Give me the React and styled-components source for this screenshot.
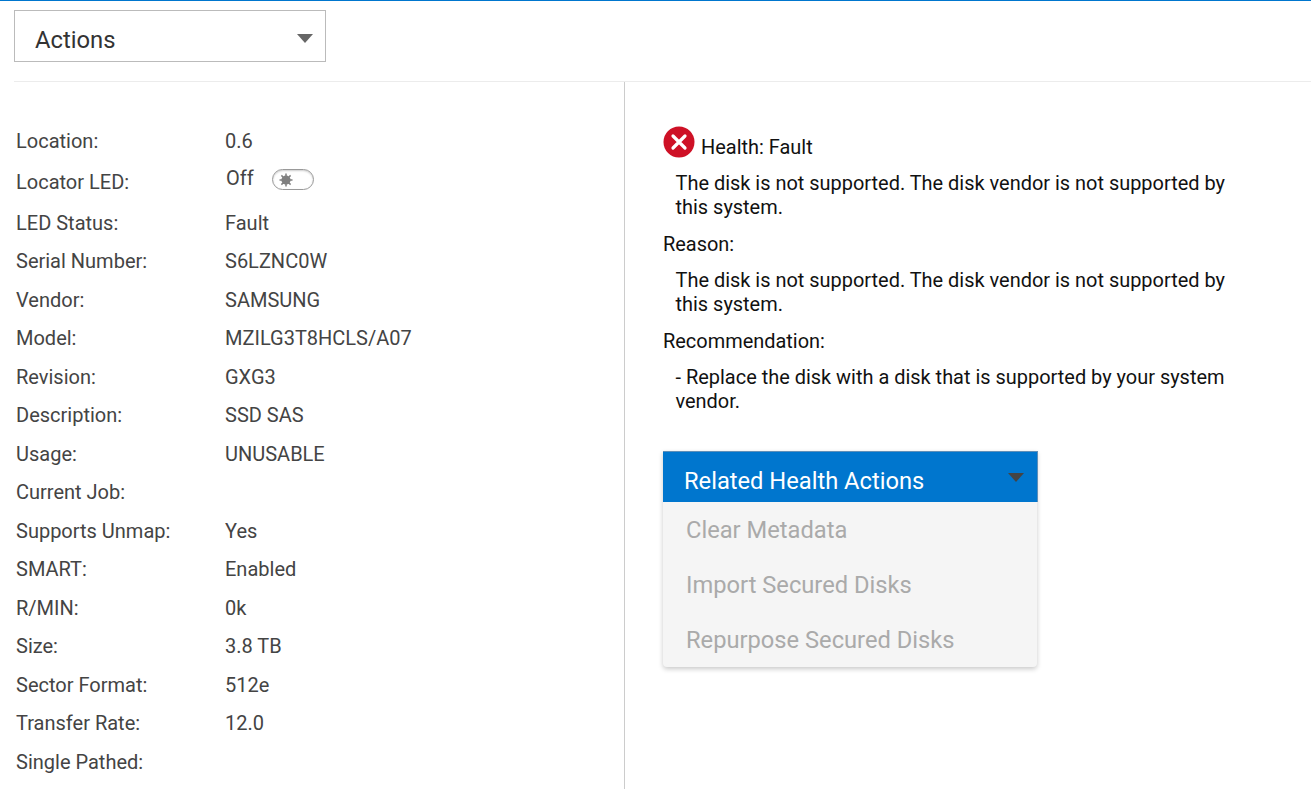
import React from "react";
import styled, { createGlobalStyle } from "styled-components";

const GlobalStyle = createGlobalStyle`
  html, body {
    margin: 0;
    padding: 0;
    background: #fff;
    font-family: Roboto, "Liberation Sans", sans-serif;
  }
`;

const Page = styled.div`
  width: 1311px;
  height: 803px;
  overflow: hidden;
  border-top: 1px solid #0076ce;
  box-sizing: border-box;
`;

const Toolbar = styled.div`
  margin-left: 14px;
  height: 81px;
  padding-top: 9px;
  box-sizing: border-box;
  border-bottom: 1px solid #ececec;
`;

const ActionsSelect = styled.div`
  width: 312px;
  height: 52px;
  box-sizing: border-box;
  border: 1px solid #bbb;
  display: flex;
  align-items: center;
  justify-content: space-between;
  padding: 8px 12px 0 20px;
  font-size: 23.8px;
  color: #333;
`;

const Caret = styled.span`
  width: 0;
  height: 0;
  border-left: 8.5px solid transparent;
  border-right: 8.5px solid transparent;
  border-top: 9px solid ${(p) => p.$color};
  margin-bottom: ${(p) => p.$lift}px;
`;

const Columns = styled.div`
  display: flex;
  height: 707px;
`;

const LeftPane = styled.div`
  width: 625px;
  height: 707px;
  box-sizing: border-box;
  padding: 39.5px 0 0 16px;
  border-right: 1px solid #ccc;
`;

const Row = styled.div`
  display: flex;
  align-items: center;
  height: ${(p) => p.$h || 38.5}px;
  font-size: 20px;
  color: #444;
`;

const Label = styled.div`
  width: 209px;
`;

const Value = styled.div`
  display: flex;
  align-items: center;
`;

const OffText = styled.span`
  margin: 0 18px 0 1px;
  position: relative;
  top: -4px;
`;

const LedToggle = styled.span`
  width: 42px;
  height: 21px;
  box-sizing: border-box;
  border: 1px solid #999;
  border-radius: 11px;
  display: inline-flex;
  align-items: center;
  padding-left: 3px;
  box-shadow: inset 0 1px 2px rgba(0, 0, 0, 0.2);
  position: relative;
  top: -2px;
`;

const RightPane = styled.div`
  padding: 44px 0 0 38px;
  width: 600px;
  font-size: 19.95px;
  color: #111;
`;

const HealthLine = styled.div`
  display: flex;
  align-items: flex-start;
  height: 45px;
`;

const HealthText = styled.span`
  margin: 9px 0 0 6px;
  line-height: 24px;
`;

const Message = styled.div`
  width: 565px;
  padding-left: 12.5px;
  line-height: 24px;
  margin-bottom: ${(p) => p.$mb}px;
`;

const Heading = styled.div`
  line-height: 24px;
  margin-bottom: ${(p) => p.$mb}px;
`;

const Dropdown = styled.div`
  width: 374px;
  margin-top: 38px;
  border-radius: 0 0 4px 4px;
  background: #f5f5f5;
  box-shadow: 0 2px 5px rgba(0, 0, 0, 0.22);
`;

const DropdownHead = styled.div`
  height: 51px;
  width: 375px;
  box-sizing: border-box;
  background: #0076ce;
  border-top: 1px solid #5f8fb8;
  border-right: 1px solid #5f8fb8;
  color: #fff;
  font-size: 23.7px;
  display: flex;
  align-items: center;
  justify-content: space-between;
  padding: 8px 13px 0 21px;
`;

const DropdownItem = styled.div`
  height: 55px;
  display: flex;
  align-items: center;
  padding-left: 23px;
  font-size: 23.7px;
  color: #aaa;
`;

const FaultIcon = () => (
  <svg width="32" height="32" viewBox="0 0 32 32">
    <circle cx="16" cy="16" r="15.5" fill="#ce1126" />
    <path d="M10 10 L22 22 M22 10 L10 22" stroke="#fff" strokeWidth="3.2" strokeLinecap="round" />
  </svg>
);

const SunIcon = () => (
  <svg width="20" height="18" viewBox="0 0 20 18">
    <circle cx="10" cy="9" r="4.6" fill="#808080" />
    <path
      d="M10 2.5V5M10 13v2.5M3.5 9H6M14 9h2.5M5.4 4.4l1.8 1.8M12.8 11.8l1.8 1.8M14.6 4.4l-1.8 1.8M7.2 11.8l-1.8 1.8"
      stroke="#808080"
      strokeWidth="1.5"
    />
  </svg>
);

const rows = [
  ["Location:", "0.6"],
  ["Locator LED:", "led", 43.5],
  ["LED Status:", "Fault"],
  ["Serial Number:", "S6LZNC0W"],
  ["Vendor:", "SAMSUNG"],
  ["Model:", "MZILG3T8HCLS/A07"],
  ["Revision:", "GXG3"],
  ["Description:", "SSD SAS"],
  ["Usage:", "UNUSABLE"],
  ["Current Job:", ""],
  ["Supports Unmap:", "Yes"],
  ["SMART:", "Enabled"],
  ["R/MIN:", "0k"],
  ["Size:", "3.8 TB"],
  ["Sector Format:", "512e"],
  ["Transfer Rate:", "12.0"],
  ["Single Pathed:", ""],
];

const notSupported = "The disk is not supported. The disk vendor is not supported by this system.";

export default function App() {
  return (
    <Page>
      <GlobalStyle />
      <Toolbar>
        <ActionsSelect>
          Actions
          <Caret $color="#666" $lift={3} />
        </ActionsSelect>
      </Toolbar>
      <Columns>
        <LeftPane>
          {rows.map(([label, value, h]) => (
            <Row key={label} $h={h}>
              <Label>{label}</Label>
              <Value>
                {value === "led" ? (
                  <>
                    <OffText>Off</OffText>
                    <LedToggle>
                      <SunIcon />
                    </LedToggle>
                  </>
                ) : (
                  value
                )}
              </Value>
            </Row>
          ))}
        </LeftPane>
        <RightPane>
          <HealthLine>
            <FaultIcon />
            <HealthText>Health: Fault</HealthText>
          </HealthLine>
          <Message $mb={13}>{notSupported}</Message>
          <Heading $mb={12}>Reason:</Heading>
          <Message $mb={13}>{notSupported}</Message>
          <Heading $mb={12}>Recommendation:</Heading>
          <Message $mb={0}>- Replace the disk with a disk that is supported by your system vendor.</Message>
          <Dropdown>
            <DropdownHead>
              Related Health Actions
              <Caret $color="#444" $lift={7} />
            </DropdownHead>
            <DropdownItem>Clear Metadata</DropdownItem>
            <DropdownItem>Import Secured Disks</DropdownItem>
            <DropdownItem>Repurpose Secured Disks</DropdownItem>
          </Dropdown>
        </RightPane>
      </Columns>
    </Page>
  );
}
